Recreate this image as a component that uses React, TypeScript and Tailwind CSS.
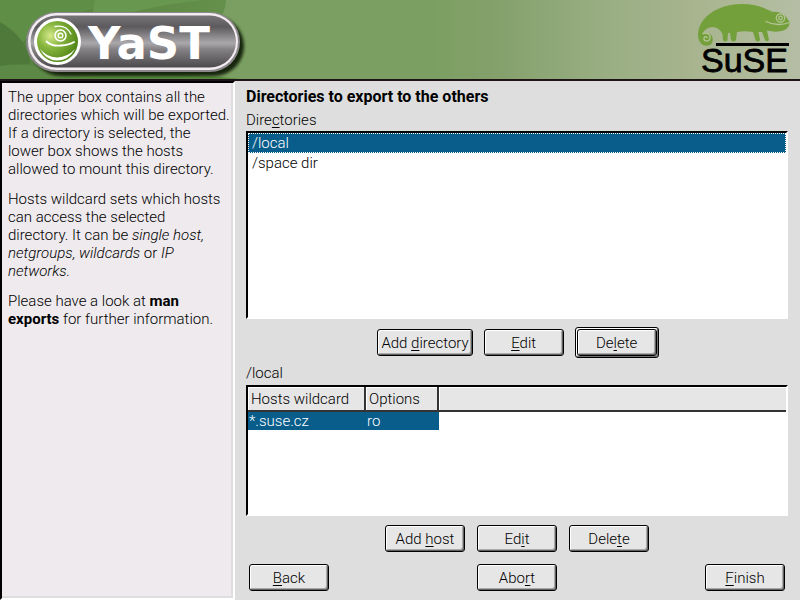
import type { ReactNode } from "react";

const sunken =
  "border-2 border-l-black border-t-black border-r-white border-b-white outline-none";

function Key({ children }: { children: ReactNode }) {
  return <span className="underline decoration-1 underline-offset-2">{children}</span>;
}

function Button({ children, isDefault = false }: { children: ReactNode; isDefault?: boolean }) {
  const button = (
    <button
      type="button"
      className="h-[27px] min-w-20 rounded-[3px] border border-black bg-[#e6e6e6] px-[3px] pt-px text-center leading-6 shadow-[inset_1px_1px_0_#fff,inset_-1px_-1px_0_#606060,inset_-2px_-2px_0_#a8aaa8]"
    >
      {children}
    </button>
  );
  if (!isDefault) return button;
  return (
    <div className="flex rounded-[3px] border border-black bg-[#d0d2d0] p-px shadow-[inset_1px_1px_0_#fff,inset_-1px_-1px_0_#707070]">
      {button}
    </div>
  );
}

function YastLogo() {
  return (
    <svg className="block h-[79px] w-[360px]" viewBox="0 0 360 79" role="img" aria-label="YaST">
      <defs>
        <linearGradient id="pill" x1="0" y1="0" x2="0" y2="1">
          <stop offset="0" stopColor="#777477" />
          <stop offset=".22" stopColor="#5d5a5d" />
          <stop offset=".53" stopColor="#aaa8ab" />
          <stop offset=".65" stopColor="#858285" />
          <stop offset="1" stopColor="#4c494c" />
        </linearGradient>
        <radialGradient id="ball" cx=".32" cy=".36" r=".75">
          <stop offset="0" stopColor="#d4e98a" />
          <stop offset=".4" stopColor="#86b53d" />
          <stop offset="1" stopColor="#4c8013" />
        </radialGradient>
        <filter id="soft" x="-10%" y="-30%" width="120%" height="160%">
          <feGaussianBlur stdDeviation="1.5" />
        </filter>
        <linearGradient id="leaf" x1="0" x2="1">
          <stop offset="0" stopColor="#55803f" />
          <stop offset="1" stopColor="#64904b" />
        </linearGradient>
      </defs>
      <path d="M0 0H226Q226 22 195 42Q165 65 180 79H0Z" fill="url(#leaf)" />
      <path d="M0 0H140Q60 10 22 42L0 22Z" fill="#5f8f46" />
      <path d="M95 0H205Q140 6 90 26Z" fill="#68974f" />
      <path d="M0 22Q28 38 30 64L0 66Z" fill="#4f793a" />
      <path d="M0 66Q40 60 70 79H0Z" fill="#5d8946" />
      <path d="M60 79Q150 68 240 79Z" fill="#5b8b3f" />
      <rect x="31" y="16" width="213" height="60" rx="30" fill="#17250f" filter="url(#soft)" />
      <rect x="26" y="12" width="214" height="60" rx="30" fill="#8b878b" />
      <rect x="28" y="13" width="210" height="57" rx="28.5" fill="#f3edf2" />
      <rect x="30.500" y="15.500" width="205.500" height="52" rx="26" fill="url(#pill)" />
      <circle cx="57.500" cy="41.500" r="23.500" fill="#fff" />
      <circle cx="57.500" cy="41.500" r="20.500" fill="url(#ball)" />
      <g fill="none" stroke="#fff" strokeLinecap="round">
        <circle cx="60.500" cy="35.500" r="5.500" strokeWidth="1.500" />
        <circle cx="60.500" cy="35.500" r="2.300" strokeWidth="1.400" />
        <path d="M55 26.500Q66 24.500 71 34" strokeWidth="1.300" />
        <path d="M46.500 41.500Q52 46.500 61 45.500Q69 45 74 42" strokeWidth="1.800" />
      </g>
      <path d="M40 48.500Q46 57 57 57.500Q68 57 75 49Q69 60.500 57 60.500Q45 60 40 48.500Z" fill="#fff" />
      <text x="88" y="58.500" fontSize="45" className="fill-white font-['DejaVu_Sans'] font-bold">
        YaST
      </text>
    </svg>
  );
}

function SuseLogo() {
  return (
    <svg className="block h-[79px] w-[110px]" viewBox="0 0 110 79" role="img" aria-label="SuSE">
      <path
        fill="#74a03c"
        d="M8 35C8 24 16 14 28 9C41 3 62 2 76 9L83 12C90 11 96 15 98 20L100 22Q99 31 88 31.500Q83 32 77 30.500L79 40Q77 42.500 75 40L72 32L68.500 32L70 40Q67.500 43 65.500 40L63 32Q55 30.500 47 32L46 40Q43.500 43 41 40L40 33L38 33L37.500 40Q35 43 33 40L32.500 34Q29 27 22 27Q15 28 13 33Q19 32 22 36Q24 41 21 44.500Q15 47.500 11 43.500Q8 40 8 35Z"
      />
      <g fill="none" stroke="#b4c495" strokeWidth="1.300" strokeLinecap="round">
        <path d="M13 33.500Q18.500 32 20 36Q20.500 41 17 41Q13.500 41 14 38Q15 35.500 17 37.500" />
        <circle cx="90.500" cy="18" r="4.200" />
        <circle cx="90.500" cy="18" r="1.800" />
        <path d="M76 21.500Q87 27 99.500 22.500" />
      </g>
      <rect x="26" y="43" width="73" height="3" />
      <text
        x="11"
        y="71.500"
        fontSize="34"
        stroke="#000"
        strokeWidth=".8"
        className="fill-black font-['Liberation_Sans'] font-normal"
      >
        SuSE
      </text>
    </svg>
  );
}

const directories = ["/local", "/space dir"];

const headCell =
  "h-[25px] border-r-2 border-b-2 border-[#333] bg-[#e6e6e6] p-0 pl-[3px] pt-0.5 text-left font-light shadow-[inset_1px_1px_0_#fff]";

export default function App() {
  return (
    <div className="flex min-h-screen flex-col bg-[#dedede] font-['Roboto','Liberation_Sans',sans-serif] text-[15px] leading-[18px] font-light text-black">
      <header className="flex h-[81px] shrink-0 justify-between border-b-2 border-[#1c1416] bg-[linear-gradient(90deg,#749a5b_0%,#7b9f62_30%,#7b9f62_54%,#84a06b_62%,#98ae82_75%,#a9b590_88%,#b5bea4_100%)]">
        <YastLogo />
        <SuseLogo />
      </header>

      <div className="flex flex-1">
        <aside className={`${sunken} w-[235px] shrink-0 bg-[#eeeaee] pt-[5px] pl-1.5 shadow-[inset_-2px_-2px_0_#dedede]`}>
          <div className="flex flex-col gap-3">
            <p>
              The upper box contains all the directories which will be exported.
              <br />
              If a directory is selected, the
              <br />
              lower box shows the hosts
              <br />
              allowed to mount this directory.
            </p>
            <p>
              Hosts wildcard sets which hosts
              <br />
              can access the selected
              <br />
              directory. It can be <i>single host,</i>
              <br />
              <i>netgroups,</i> <i>wildcards</i> or <i>IP</i>
              <br />
              <i>networks.</i>
            </p>
            <p>
              Please have a look at <b className="font-bold">man exports</b> for further
              information.
            </p>
          </div>
        </aside>

        <main className="flex min-w-0 flex-1 flex-col pt-[7px] pr-3 pb-[9px] pl-[11px]">
          <h1 className="text-base leading-[18px] font-bold">Directories to export to the others</h1>
          <div id="dirs" className="mt-[5px] mb-0.5">
            Dire<Key>c</Key>tories
          </div>
          <ul role="listbox" aria-labelledby="dirs" className={`${sunken} min-h-16 flex-[189_1_0px] bg-white`}>
            {directories.map((dir, i) => (
              <li
                key={dir}
                role="option"
                aria-selected={i === 0}
                className="border border-transparent px-[3px] aria-selected:border-dotted aria-selected:border-white aria-selected:bg-[#085d8b] aria-selected:text-white"
              >
                {dir}
              </li>
            ))}
          </ul>
          <div className="mt-2 mb-1.5 flex items-center justify-center gap-[11px] pl-0.5">
            <Button>
              Add <Key>d</Key>irectory
            </Button>
            <Button>
              <Key>E</Key>dit
            </Button>
            <Button isDefault>
              De<Key>l</Key>ete
            </Button>
          </div>
          <h2 className="mb-[3px]">/local</h2>
          <div className={`${sunken} min-h-16 flex-[131_1_0px] bg-white`}>
            <table className="w-full table-fixed border-separate border-spacing-0">
              <thead>
                <tr>
                  <th className={`${headCell} w-[118px]`}>Hosts wildcard</th>
                  <th className={`${headCell} w-[73px]`}>Options</th>
                  <th className="border-b-2 border-[#333] bg-[#e6e6e6] p-0 shadow-[inset_1px_1px_0_#fff]" />
                </tr>
              </thead>
              <tbody>
                <tr>
                  <td className="bg-[#085d8b] p-0 pl-px text-white">*.suse.cz</td>
                  <td className="bg-[#085d8b] p-0 pl-px text-white">ro</td>
                  <td className="p-0" />
                </tr>
              </tbody>
            </table>
          </div>
          <div className="mt-[9px] flex justify-center gap-3">
            <Button>
              Add <Key>h</Key>ost
            </Button>
            <Button>
              Ed<Key>i</Key>t
            </Button>
            <Button>
              Dele<Key>t</Key>e
            </Button>
          </div>
          <div className="mt-3 flex justify-between px-[3px]">
            <Button>
              <Key>B</Key>ack
            </Button>
            <Button>
              Abo<Key>r</Key>t
            </Button>
            <Button>
              <Key>F</Key>inish
            </Button>
          </div>
        </main>
      </div>
    </div>
  );
}
